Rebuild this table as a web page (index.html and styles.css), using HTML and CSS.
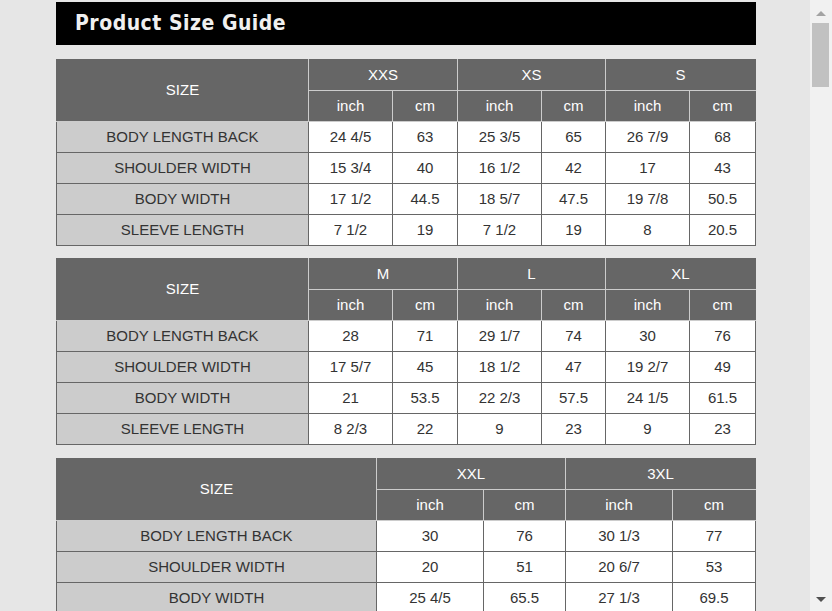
FILE: index.html
```html
<!DOCTYPE html>
<html lang="en">
<head>
<meta charset="utf-8">
<title>Product Size Guide</title>
<link rel="stylesheet" href="styles.css">
</head>
<body>
<div class="page">
  <main class="main">
    <div class="guide">
      <h1 class="title">Product Size Guide</h1>

      <table class="size-table">
        <colgroup>
          <col class="w-label"><col class="w-in"><col class="w-cm1"><col class="w-in"><col class="w-cm2"><col class="w-in"><col class="w-cm3">
        </colgroup>
        <thead>
          <tr><th class="size" rowspan="2">SIZE</th><th colspan="2">XXS</th><th colspan="2">XS</th><th colspan="2" class="last">S</th></tr>
          <tr><th>inch</th><th>cm</th><th>inch</th><th>cm</th><th>inch</th><th class="last">cm</th></tr>
        </thead>
        <tbody>
          <tr><td class="label">BODY LENGTH BACK</td><td>24 4/5</td><td>63</td><td>25 3/5</td><td>65</td><td>26 7/9</td><td>68</td></tr>
          <tr><td class="label">SHOULDER WIDTH</td><td>15 3/4</td><td>40</td><td>16 1/2</td><td>42</td><td>17</td><td>43</td></tr>
          <tr><td class="label">BODY WIDTH</td><td>17 1/2</td><td>44.5</td><td>18 5/7</td><td>47.5</td><td>19 7/8</td><td>50.5</td></tr>
          <tr><td class="label">SLEEVE LENGTH</td><td>7 1/2</td><td>19</td><td>7 1/2</td><td>19</td><td>8</td><td>20.5</td></tr>
        </tbody>
      </table>

      <table class="size-table">
        <colgroup>
          <col class="w-label"><col class="w-in"><col class="w-cm1"><col class="w-in"><col class="w-cm2"><col class="w-in"><col class="w-cm3">
        </colgroup>
        <thead>
          <tr><th class="size" rowspan="2">SIZE</th><th colspan="2">M</th><th colspan="2">L</th><th colspan="2" class="last">XL</th></tr>
          <tr><th>inch</th><th>cm</th><th>inch</th><th>cm</th><th>inch</th><th class="last">cm</th></tr>
        </thead>
        <tbody>
          <tr><td class="label">BODY LENGTH BACK</td><td>28</td><td>71</td><td>29 1/7</td><td>74</td><td>30</td><td>76</td></tr>
          <tr><td class="label">SHOULDER WIDTH</td><td>17 5/7</td><td>45</td><td>18 1/2</td><td>47</td><td>19 2/7</td><td>49</td></tr>
          <tr><td class="label">BODY WIDTH</td><td>21</td><td>53.5</td><td>22 2/3</td><td>57.5</td><td>24 1/5</td><td>61.5</td></tr>
          <tr><td class="label">SLEEVE LENGTH</td><td>8 2/3</td><td>22</td><td>9</td><td>23</td><td>9</td><td>23</td></tr>
        </tbody>
      </table>

      <table class="size-table wide">
        <colgroup>
          <col class="w-label-wide"><col class="w-in-wide"><col class="w-cm-wide1"><col class="w-in-wide"><col class="w-cm-wide2">
        </colgroup>
        <thead>
          <tr><th class="size" rowspan="2">SIZE</th><th colspan="2">XXL</th><th colspan="2" class="last">3XL</th></tr>
          <tr><th>inch</th><th>cm</th><th>inch</th><th class="last">cm</th></tr>
        </thead>
        <tbody>
          <tr><td class="label">BODY LENGTH BACK</td><td>30</td><td>76</td><td>30 1/3</td><td>77</td></tr>
          <tr><td class="label">SHOULDER WIDTH</td><td>20</td><td>51</td><td>20 6/7</td><td>53</td></tr>
          <tr><td class="label">BODY WIDTH</td><td>25 4/5</td><td>65.5</td><td>27 1/3</td><td>69.5</td></tr>
          <tr><td class="label">SLEEVE LENGTH</td><td>9 1/3</td><td>24</td><td>9 2/3</td><td>24.5</td></tr>
        </tbody>
      </table>
    </div>
  </main>
  <div class="scrollbar" aria-hidden="true">
    <div class="arrow-up"></div>
    <div class="thumb"></div>
    <div class="track"></div>
    <div class="arrow-down"></div>
  </div>
</div>
</body>
</html>
```

FILE: styles.css
```css
html, body {
  margin: 0;
  padding: 0;
  height: 100%;
  overflow: hidden;
}
body {
  background: #e6e6e6;
  font-family: "Liberation Sans", Arial, sans-serif;
}
.page {
  display: flex;
  height: 100%;
}
.main {
  flex: 1;
  overflow: hidden;
  padding-top: 2px;
}
.guide {
  width: 700px;
  margin-left: 56px;
}
.title {
  margin: 0;
  height: 43px;
  background: #000;
  color: #f0f0f0;
  padding-left: 19px;
  font-family: "DejaVu Sans Condensed", "DejaVu Sans", sans-serif;
  font-stretch: condensed;
  font-weight: bold;
  font-size: 21px;
  letter-spacing: 0.5px;
  line-height: 43px;
}
.size-table {
  width: 699px;
  border-collapse: collapse;
  table-layout: fixed;
  margin-top: 14px;
  font-size: 15px;
  line-height: 18px;
}
.size-table + .size-table {
  margin-top: 12px;
}
.size-table + .size-table.wide {
  margin-top: 13px;
}
.w-label { width: 252px; }
.w-in { width: 84px; }
.w-cm1 { width: 65px; }
.w-cm2 { width: 64px; }
.w-cm3 { width: 66px; }
.w-label-wide { width: 320px; }
.w-in-wide { width: 107px; }
.w-cm-wide1 { width: 82px; }
.w-cm-wide2 { width: 83px; }

.size-table th,
.size-table td {
  padding: 5.5px 0 6.5px;
  text-align: center;
  font-weight: normal;
}
.size-table th {
  background: #666666;
  color: #ffffff;
  border: 1px solid #cccccc;
}
.size-table thead tr:first-child th {
  border-top-color: #666666;
}
.size-table th.size {
  border-left-color: #666666;
}
.size-table th.last {
  border-right-color: #666666;
}
.size-table td {
  background: #ffffff;
  color: #333333;
  border: 1px solid #666666;
}
.size-table td.label {
  background: #cccccc;
}

.scrollbar {
  width: 22px;
  height: 100%;
  background: #f1f1f1;
  display: flex;
  flex-direction: column;
  align-items: center;
}
.arrow-up {
  margin-top: 11px;
  width: 0;
  height: 0;
  border-left: 5px solid transparent;
  border-right: 5px solid transparent;
  border-bottom: 5px solid #a3a3a3;
}
.thumb {
  margin-top: 7px;
  margin-left: -2px;
  width: 17px;
  height: 64px;
  background: #c1c1c1;
}
.track {
  flex: 1;
}
.arrow-down {
  margin-bottom: 9px;
  width: 0;
  height: 0;
  border-left: 5px solid transparent;
  border-right: 5px solid transparent;
  border-top: 5px solid #505050;
}
```
